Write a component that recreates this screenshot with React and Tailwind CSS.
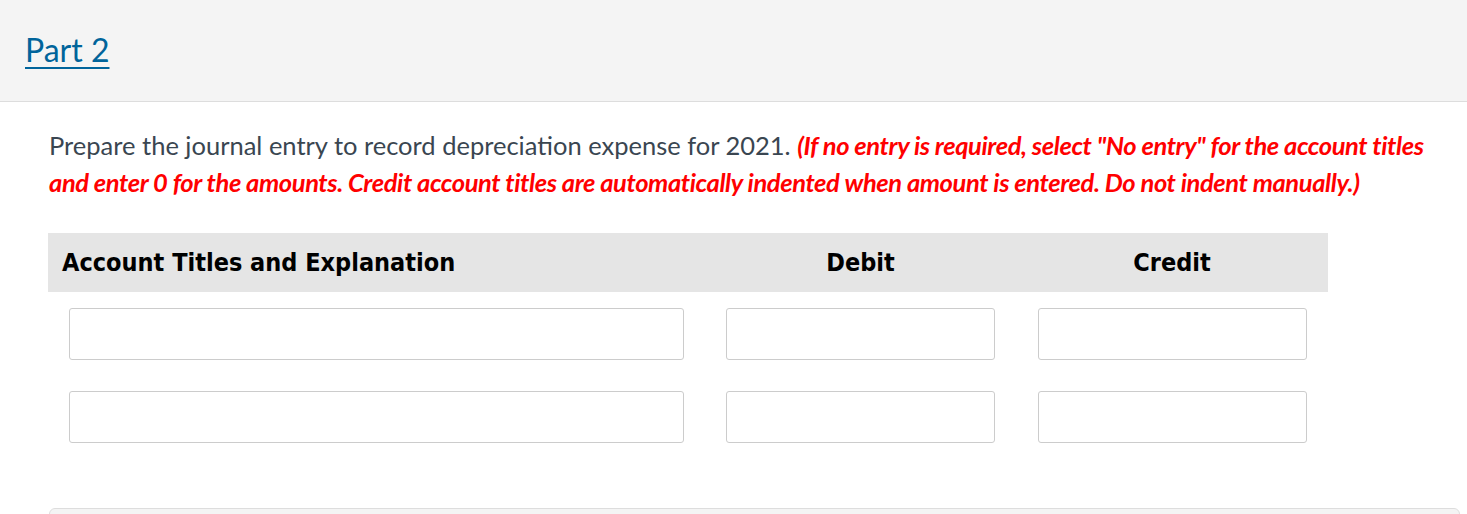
import React from "react";

const rows = [0, 1];

const App = () => {
  return (
    <div className="w-[1467px] h-[514px] overflow-hidden bg-white font-['Lato',sans-serif]">
      <div className="h-[102px] bg-[#f4f4f4] border-b border-[#dddddd] pl-[25px] pt-[31px]">
        <a href="#" className="text-[32px] leading-[38px] text-[#00649b] underline underline-offset-[5px] decoration-[2px]">
          Part 2
        </a>
      </div>

      <div className="pl-[49px] pt-[25px]">
        <p className="w-[1400px] text-[25.5px] leading-[37px] text-[#3a4651]">
          Prepare the journal entry to record depreciation expense for 2021.{" "}
          <span className="text-[#ff0000] font-bold italic tracking-[-0.4px]">
            (If no entry is required, select "No entry" for the account titles and enter 0 for the amounts. Credit account titles are automatically indented when amount is entered. Do not indent manually.)
          </span>
        </p>
      </div>

      <div className="ml-[48px] mt-[32px] w-[1280px]">
        <div className="grid grid-cols-[657px_311px_312px] h-[59px] items-center bg-[#e5e5e5] text-[25px] font-bold text-black font-['DejaVu_Sans_Condensed','DejaVu_Sans',sans-serif] font-stretch-condensed">
          <div className="pl-[14px]">Account Titles and Explanation</div>
          <div className="text-center">Debit</div>
          <div className="text-center">Credit</div>
        </div>
        {rows.map((r) => (
          <div key={r} className="grid grid-cols-[657px_311px_312px] pt-[16px] pb-[15px]">
            <div className="px-[21px]">
              <input className="w-full h-[52px] border border-[#cccccc] rounded-[3px] bg-white" />
            </div>
            <div className="px-[21px]">
              <input className="w-full h-[52px] border border-[#cccccc] rounded-[3px] bg-white" />
            </div>
            <div className="pl-[22px] pr-[21px]">
              <input className="w-full h-[52px] border border-[#cccccc] rounded-[3px] bg-white" />
            </div>
          </div>
        ))}
      </div>

      <div className="ml-[49px] mr-[7px] mt-[50px] h-[40px] bg-[#f4f4f4] border border-[#dddddd] rounded-[6px]" />
    </div>
  );
};

export default App;
